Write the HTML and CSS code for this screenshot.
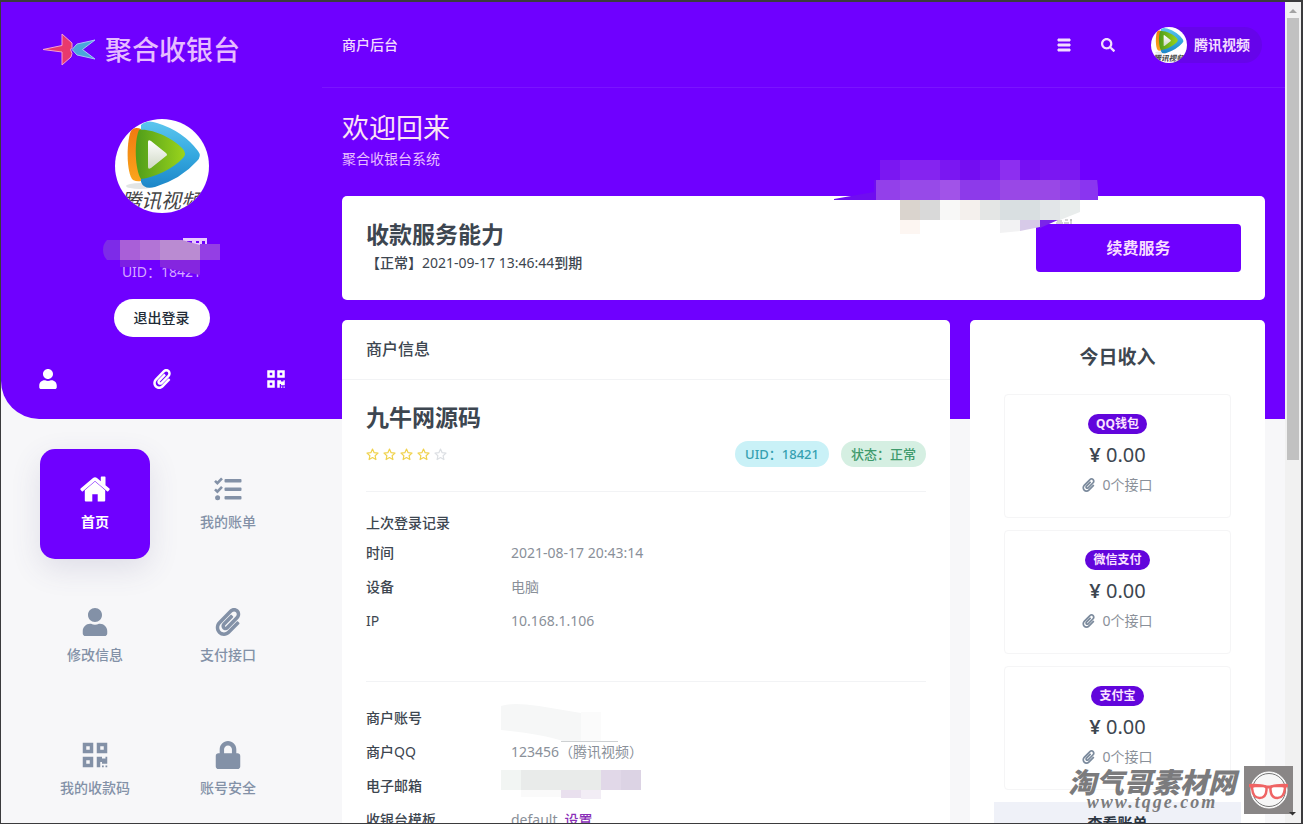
FILE: index.html
```html
<!DOCTYPE html>
<html lang="zh-CN">
<head>
<meta charset="utf-8">
<title>商户后台</title>
<link rel="stylesheet" href="styles.css">
</head>
<body>
<svg class="defs" width="0" height="0" aria-hidden="true">
  <defs>
    <linearGradient id="gBlue" x1="0" y1="0" x2="0" y2="1"><stop offset="0" stop-color="#5cc6ee"/><stop offset="0.5" stop-color="#35a9e0"/><stop offset="1" stop-color="#1c86c8"/></linearGradient>
    <linearGradient id="gGreen" x1="0" y1="0" x2="1" y2="0"><stop offset="0" stop-color="#4f9d1a"/><stop offset="1" stop-color="#9bd41c"/></linearGradient>
    <linearGradient id="gOrange" x1="0" y1="0" x2="0" y2="1"><stop offset="0" stop-color="#f07a10"/><stop offset="1" stop-color="#fba51c"/></linearGradient>
    <linearGradient id="gPlay" x1="0" y1="0" x2="0" y2="1"><stop offset="0" stop-color="#ffffff"/><stop offset="1" stop-color="#cfd8c4"/></linearGradient>
    <clipPath id="round"><circle cx="47" cy="47" r="47"/></clipPath>
  </defs>
  <symbol id="i-user" viewBox="0 0 448 512"><path d="M224 256c70.7 0 128-57.3 128-128S294.700 0 224 0 96 57.300 96 128s57.300 128 128 128zm89.600 32h-16.700c-22.200 10.200-46.900 16-72.900 16s-50.600-5.800-72.900-16h-16.700C60.200 288 0 348.200 0 422.400V464c0 26.500 21.500 48 48 48h352c26.500 0 48-21.500 48-48v-41.600c0-74.200-60.200-134.400-134.400-134.400z"/></symbol>
  <symbol id="i-lock" viewBox="0 0 448 512"><path d="M400 224h-24v-72C376 68.200 307.800 0 224 0S72 68.200 72 152v72H48c-26.500 0-48 21.500-48 48v192c0 26.500 21.500 48 48 48h352c26.500 0 48-21.500 48-48V272c0-26.500-21.500-48-48-48zm-104 0H152v-72c0-39.700 32.300-72 72-72s72 32.300 72 72v72z"/></symbol>
  <symbol id="i-search" viewBox="0 0 512 512"><path d="M505 442.700L405.300 343c-4.500-4.500-10.600-7-17-7H372c27.600-35.300 44-79.700 44-128C416 93.100 322.900 0 208 0S0 93.100 0 208s93.100 208 208 208c48.300 0 92.700-16.400 128-44v16.300c0 6.400 2.500 12.500 7 17l99.700 99.700c9.400 9.400 24.600 9.400 33.900 0l28.300-28.300c9.400-9.400 9.400-24.600.1-34zM208 336c-70.700 0-128-57.200-128-128 0-70.700 57.200-128 128-128 70.700 0 128 57.200 128 128 0 70.700-57.200 128-128 128z"/></symbol>
  <symbol id="i-clip" viewBox="0 0 448 512"><path d="M43.246 466.142c-58.430-60.289-57.341-157.511 1.386-217.581L254.392 34c44.316-45.332 116.351-45.336 160.671 0 43.890 44.894 43.943 117.329 0 162.276L232.214 383.128c-29.855 30.537-78.633 30.111-107.982-.998-28.275-29.970-27.368-77.473 1.452-106.953l143.743-146.835c6.182-6.314 16.312-6.422 22.626-.241l22.861 22.379c6.315 6.182 6.422 16.312.241 22.626L171.427 319.927c-4.932 5.045-5.236 13.428-.648 18.292 4.372 4.634 11.245 4.711 15.688.165l182.849-186.851c19.613-20.062 19.613-52.725-.011-72.798-19.189-19.627-49.957-19.637-69.154 0L90.390 293.295c-34.763 35.560-35.299 93.120-1.191 128.313 34.010 35.093 88.985 35.137 123.058.286l172.060-175.999c6.177-6.319 16.307-6.433 22.626-.256l22.877 22.364c6.319 6.177 6.434 16.307.256 22.626l-172.060 175.998c-59.576 60.938-155.943 60.216-214.770-.485z"/></symbol>
  <symbol id="i-qr" viewBox="0 0 448 512"><path d="M0 224h192V32H0v192zM64 96h64v64H64V96zm192-64v192h192V32H256zm128 128h-64V96h64v64zM0 480h192V288H0v192zm64-128h64v64H64v-64zm352-64h32v128h-96v-32h-32v96h-64V288h96v32h64v-32zm0 160h32v32h-32v-32zm-64 0h32v32h-32v-32z"/></symbol>
  <symbol id="i-home" viewBox="0 0 30 26"><path d="M15 5.500 4.800 14.200V24.500a1 1 0 0 0 1 1H12.300V18.300h5.400V25.500h6.500a1 1 0 0 0 1-1V14.200z"/><path d="M29.400 12.600 25.500 9.300V1.200a.7.700 0 0 0-.7-.7H21.500a.7.700 0 0 0-.7.700V5.300L17 2.100a3 3 0 0 0-4 0L.6 12.600a.8.800 0 0 0-.1 1.100l1.300 1.500a.8.800 0 0 0 1.100.1L15 5l12.100 10.300a.8.800 0 0 0 1.100-.1l1.300-1.500a.8.800 0 0 0-.1-1.100z"/></symbol>
  <symbol id="i-tasks" viewBox="0 0 28 24"><g fill="none" stroke="currentColor" stroke-width="2.600"><path d="M1 3.800 3.400 6.200 8 1.300M1 12.300l2.400 2.400L8 9.800"/></g><circle cx="3.600" cy="20.800" r="2.500"/><rect x="10.500" y="2" width="17" height="3.600" rx="1"/><rect x="10.500" y="10.500" width="17" height="3.600" rx="1"/><rect x="10.500" y="19" width="17" height="3.600" rx="1"/></symbol>
  <symbol id="i-star" viewBox="0 0 24 24"><path fill="none" stroke="currentColor" stroke-width="2.200" stroke-linejoin="round" d="m12 2 3 6.600 7.200.8-5.400 4.800 1.500 7.100L12 17.700l-6.300 3.600 1.500-7.100-5.400-4.800L9 8.600z"/></symbol>
  <symbol id="i-avatar" viewBox="0 0 94 94">
    <g clip-path="url(#round)">
      <rect width="94" height="94" fill="#fff"/>
      <ellipse cx="25" cy="67" rx="14" ry="3" fill="#e2e5e5"/>
      <path fill="url(#gOrange)" d="M17 10q5-2 9 0V62q-4 1-8-1c-7-6-7-42-1-51z"/>
      <path fill="url(#gBlue)" d="M26 6Q32 0 42 4 68 12 83 32q4 5-1 10Q66 60 40 68q-11 3-14-5z"/>
      <path fill="url(#gGreen)" d="M24 11c12-2 34 8 44 19q4 5 0 9C58 50 38 59 26 60c-6-9-7-38-2-49z"/>
      <path fill="url(#gPlay)" d="M33 23q0-3 3-1l15 12q2 2 0 3L36 49q-3 2-3-1z"/>
      <text class="avatar-text" x="6" y="89">腾讯视频</text>
    </g>
  </symbol>
</svg>

<div class="window">
  <div class="page">
    <div class="hero-bg"></div>

    <aside class="sidebar">
      <a class="brand" href="#">
        <svg width="55" height="34" viewBox="0 0 55 34" aria-hidden="true">
          <path d="M1 16.500 20 12.500V1l10 9v4.500l-1.500 2 1.500 4-1 3.500L20 32V19z" fill="#e8396d" stroke="#f7a0cf"/>
          <path d="M30 16.500 35 11l18-4-12.500 9.500L53 26l-18-4z" fill="#4aa8da" stroke="#a8c4f7"/>
        </svg>
        <span>聚合收银台</span>
      </a>
      <div class="profile">
        <svg class="avatar-lg" role="img" aria-label="头像"><use href="#i-avatar"/></svg>
        <p class="uid">UID：18421</p>
        <svg class="name-mask" width="118" height="44" viewBox="0 0 118 44" aria-hidden="true">
          <path d="M80 0h24v8H80z" fill="#e9c8ff"/>
          <path d="M84 3h5v2h-5zM93 3h3v2h-3zM99 3h3v3h-3z" fill="#6f00ff"/>
          <path d="M4 2h13v20H4q-4-4-4-10T4 2z" fill="#7d2be8"/>
          <path d="M17 2h20v20H17z" fill="#a95fd8"/><path d="M37 2h20v20H37z" fill="#b274d6"/>
          <path d="M57 2h22l18 5v15H57z" fill="#ba8bd2"/><path d="M97 6h20v16H97z" fill="#943fe4"/>
          <path d="M17 22h20v7H17z" fill="#7c1fe4"/><path d="M37 22h20v7H37z" fill="#6f00ff"/>
          <path d="M57 22h40v15L57 29z" fill="#8526df"/>
        </svg>
        <button class="logout" type="button">退出登录</button>
      </div>
      <nav class="quick" aria-label="快捷入口">
        <a href="#" aria-label="修改信息"><svg class="ico-20"><use href="#i-user"/></svg></a>
        <a href="#" aria-label="支付接口"><svg class="ico-20"><use href="#i-clip"/></svg></a>
        <a href="#" aria-label="我的收款码"><svg class="ico-20"><use href="#i-qr"/></svg></a>
      </nav>
      <nav class="tiles" aria-label="主菜单">
        <a class="tile active" href="#"><svg class="ico-30"><use href="#i-home"/></svg><span>首页</span></a>
        <a class="tile" href="#"><svg class="ico-28"><use href="#i-tasks"/></svg><span>我的账单</span></a>
        <a class="tile" href="#"><svg class="ico-28"><use href="#i-user"/></svg><span>修改信息</span></a>
        <a class="tile" href="#"><svg class="ico-28"><use href="#i-clip"/></svg><span>支付接口</span></a>
        <a class="tile" href="#"><svg class="ico-28"><use href="#i-qr"/></svg><span>我的收款码</span></a>
        <a class="tile" href="#"><svg class="ico-28"><use href="#i-lock"/></svg><span>账号安全</span></a>
      </nav>
    </aside>

    <div class="main">
      <header class="topbar">
        <a class="crumb" href="#">商户后台</a>
        <div class="actions">
          <button class="icon-btn" type="button" aria-label="菜单"><svg width="14" height="14" viewBox="0 0 14 14"><path d="M1 1h12v2H1zM1 6h12v2H1zM1 11h12v2H1z" stroke="currentColor" stroke-width="1" stroke-linejoin="round"/></svg></button>
          <button class="icon-btn" type="button" aria-label="搜索"><svg width="14" height="14"><use href="#i-search"/></svg></button>
          <a class="account" href="#"><svg class="avatar-sm" aria-hidden="true"><use href="#i-avatar"/></svg><span>腾讯视频</span></a>
        </div>
      </header>

      <main class="content">
        <h1>欢迎回来</h1>
        <p class="sub">聚合收银台系统</p>

        <section class="card service">
          <div>
            <h2>收款服务能力</h2>
            <p><b>【正常】</b>2021-09-17 13:46:44<b>到期</b></p>
          </div>
          <button class="renew" type="button">续费服务</button>
          <svg class="wave-mask" width="284" height="78" viewBox="0 0 284 78" aria-hidden="true">
            <path d="M64 2h200v20H64z" fill="#7b17f2"/><path d="M84 2h40v20H84z" fill="#8524f0"/><path d="M144 2h20v20h-20z" fill="#740df2"/><path d="M184 2h20v20h-20z" fill="#8d2ff0"/><path d="M204 2h20v20h-20z" fill="#760ff4"/>
            <path d="M18 42v-1l40-7V22h224v20z" fill="#6f0df0"/>
            <path d="M60 22h24v20H60z" fill="#9340ea"/><path d="M84 22h40v20H84z" fill="#974ae8"/><path d="M124 22h20v20h-20z" fill="#a153e8"/><path d="M144 22h40v20h-40z" fill="#8d3aea"/><path d="M184 22h60v20h-60z" fill="#9948e6"/><path d="M244 22h20v20h-20z" fill="#9040ea"/><path d="M264 22h17l1 8v12h-18z" fill="#8a35f0"/>
            <path d="M84 42h20v20H84z" fill="#dad4ce"/><path d="M104 42h20v20h-20z" fill="#d9d9d9"/><path d="M124 42h20v20h-20z" fill="#f8f8f7"/><path d="M144 42h20v20h-20z" fill="#f4f0ed"/><path d="M164 42h20v20h-20z" fill="#e4e6e5"/><path d="M184 42h40v20h-40z" fill="#d9dfe1"/><path d="M224 42h20v20h-20z" fill="#e2e5e8"/><path d="M244 42h20v12l-20 8z" fill="#e9edec"/>
            <path d="M84 62h20v14H84z" fill="#fdf6f2"/><path d="M184 62h20v11l-20 2z" fill="#f2f2f3"/><path d="M204 62h20v7l-20 4z" fill="#d7cae8"/><path d="M224 62h18l-18 8z" fill="#7a25e8"/>
            <path d="M241 63h5M240 65h7M249 62h3M248 65h5M254 62h2M255 61v5" stroke="#aaa" stroke-width="1" fill="none"/>
          </svg>
        </section>

        <div class="columns">
          <section class="card merchant">
            <h3 class="card-head">商户信息</h3>
            <div class="card-body">
              <h2>九牛网源码</h2>
              <div class="rating">
                <div class="stars" role="img" aria-label="4 / 5">
                  <svg><use href="#i-star"/></svg><svg><use href="#i-star"/></svg><svg><use href="#i-star"/></svg><svg><use href="#i-star"/></svg><svg class="off"><use href="#i-star"/></svg>
                </div>
                <div class="pills"><span class="pill info">UID：18421</span><span class="pill ok">状态：正常</span></div>
              </div>
              <div class="block login">
                <h4>上次登录记录</h4>
                <dl>
                  <dt>时间</dt><dd>2021-08-17 20:43:14</dd>
                  <dt>设备</dt><dd>电脑</dd>
                  <dt class="latin">IP</dt><dd>10.168.1.106</dd>
                </dl>
              </div>
              <div class="block details">
                <dl>
                  <dt>商户账号</dt>
                  <dd class="masked"><svg class="mask" width="130" height="42" viewBox="0 0 130 42" aria-hidden="true"><path d="M0 4q10-4 38 0l42 7v28H62Q40 32 0 28z" fill="#f6f7f7"/><path d="M80 10h20v30H80z" fill="#fbfbfb"/><path d="M60 39h57v1H60z" fill="#cdd0d2"/></svg></dd>
                  <dt>商户<span class="latin">QQ</span></dt><dd>123456（腾讯视频）</dd>
                  <dt>电子邮箱</dt>
                  <dd class="masked"><svg class="mask" width="140" height="30" viewBox="0 0 140 30" aria-hidden="true"><path d="M0 0h20v20H0z" fill="#f2f5f3"/><path d="M20 0h80v20H20z" fill="#e9ebea"/><path d="M100 0h20v20h-20z" fill="#e1d8e8"/><path d="M120 0h20v20h-20z" fill="#dcd3e4"/><path d="M20 20h40v7H20z" fill="#fafafa"/><path d="M60 20h20v8H60z" fill="#e9e0ee"/><path d="M80 20h20v9H80z" fill="#f2edf5"/></svg></dd>
                  <dt>收银台模板</dt><dd>default&ensp;<a class="set" href="#">设置</a></dd>
                </dl>
              </div>
            </div>
          </section>

          <section class="card income">
            <h3>今日收入</h3>
            <div class="channel"><span class="tag">QQ钱包</span><p class="amount"><b>¥</b> 0.00</p><p class="ports"><svg><use href="#i-clip"/></svg>0个接口</p></div>
            <div class="channel"><span class="tag">微信支付</span><p class="amount"><b>¥</b> 0.00</p><p class="ports"><svg><use href="#i-clip"/></svg>0个接口</p></div>
            <div class="channel"><span class="tag">支付宝</span><p class="amount"><b>¥</b> 0.00</p><p class="ports"><svg><use href="#i-clip"/></svg>0个接口</p></div>
            <a class="bills" href="#">查看账单</a>
          </section>
        </div>
      </main>
    </div>
  </div>

  <div class="scrollbar" aria-hidden="true">
    <svg width="16" height="16" viewBox="0 0 16 16"><path d="M4 11 8 7l4 4z" fill="#a3a3a3"/></svg>
    <div class="track"><div class="thumb"></div></div>
    <svg width="16" height="16" viewBox="0 0 16 16"></svg>
  </div>

  <div class="watermark">
    <div class="wm-text"><span class="wm-name">淘气哥素材网</span><span class="wm-url">www.tqge.com</span></div>
    <svg width="49" height="48" viewBox="0 0 49 48" aria-hidden="true">
      <rect width="49" height="48" fill="#898686"/>
      <circle cx="25" cy="24" r="18" fill="#f7f7f7" stroke="#fff"/><circle cx="25" cy="24" r="16.500" fill="none" stroke="#777"/>
      <g stroke="#ef6464" stroke-width="2.500" fill="#fff"><path d="M8 22q0-2 3-2h8q4 0 3.500 4-.5 8-7 8-6.500 0-7.500-10z"/><path d="M41 22q0-2-3-2h-8q-4 0-3.500 4 .5 8 7 8 6.500 0 7.500-10z"/></g>
      <path d="M5 18q9-1 18 1.500h3Q35 17 44 18v3l-3 1-2-2h-8l-5 2.500h-3L18 20h-8l-2 2-3-1z" fill="#ef6464"/>
      <path d="M45 46h7l-3.500 3.500z" fill="#333"/>
    </svg>
  </div>
</div>
</body>
</html>
```
FILE: styles.css
```css
:root {
  --purple: #6f00ff;
  --ink: #3d4650;
  --muted: #8a9099;
  --slate: #8391a7;
}

* { box-sizing: border-box; }

body {
  margin: 0;
  font-family: "Noto Sans", "Noto Sans CJK SC", sans-serif;
  font-size: 14px;
  line-height: 20px;
  color: var(--ink);
}

h1, h2, h3, h4, p, dl, dd { margin: 0; }
a { color: inherit; text-decoration: none; }
button { font: inherit; border: 0; cursor: pointer; }
svg { display: block; fill: currentColor; }
.defs { position: absolute; }

.window {
  position: relative;
  display: flex;
  height: 100vh;
  overflow: hidden;
  border: solid #3b3b3d;
  border-width: 2px 2px 1px 1px;
}

.page {
  position: relative;
  flex: 1;
  min-width: 0;
  display: flex;
  overflow: hidden;
  background: #f7f7f9;
}

.hero-bg {
  position: absolute;
  inset: 0 0 auto 0;
  height: 417px;
  background: var(--purple);
  border-bottom-left-radius: 38px;
}

/* Sidebar */
.sidebar {
  position: relative;
  flex: 0 0 319px;
  color: #fff;
}
.brand {
  display: flex;
  align-items: center;
  gap: 8px;
  height: 95px;
  padding-left: 41px;
  font-size: 27px;
  font-weight: 500;
  color: #e6bcff;
}
.avatar-text {
  font-family: "Noto Sans CJK SC", sans-serif;
  font-size: 20px;
  font-style: italic;
  fill: #444;
}
.profile {
  position: relative;
  display: flex;
  flex-direction: column;
  align-items: center;
  padding-top: 22px;
}
.avatar-lg { width: 94px; height: 94px; }
.uid {
  margin-top: 49px;
  font-size: 14px;
  color: #d6a8ff;
}
.name-mask { position: absolute; top: 141px; left: 102px; }
.logout {
  margin-top: 17px;
  padding: 9px 20px;
  border-radius: 20px;
  background: #fff;
  color: #212b36;
  font-weight: 500;
}
.quick {
  display: flex;
  justify-content: space-between;
  padding: 32px 36px 0 37px;
}
.ico-20 { width: 20px; height: 20px; }
.ico-28 { width: 28px; height: 28px; }
.ico-30 { width: 30px; height: 28px; }
.tiles {
  display: grid;
  grid-template-columns: 110px 110px;
  gap: 23px;
  padding: 60px 39px 0;
}
.tile {
  display: flex;
  flex-direction: column;
  align-items: center;
  justify-content: center;
  gap: 9px;
  height: 110px;
  padding-bottom: 2px;
  border-radius: 15px;
  color: var(--slate);
  font-weight: 500;
}
.tile.active {
  background: var(--purple);
  color: #fff;
  font-weight: 700;
  box-shadow: 0 10px 30px rgba(80, 70, 130, 0.14);
}

/* Main column */
.main { position: relative; flex: 1; min-width: 0; }
.topbar {
  display: flex;
  align-items: center;
  justify-content: space-between;
  height: 86px;
  padding: 0 23px 0 20px;
  border-bottom: 1px solid #7a14ff;
  color: #f3dcff;
}
.crumb { font-weight: 500; }
.actions { display: flex; align-items: center; gap: 30px; }
.icon-btn { padding: 0; background: none; color: inherit; }
.account {
  display: flex;
  align-items: center;
  gap: 7px;
  margin-left: 6px;
  padding-right: 12px;
  border-radius: 20px;
  background: #6604ea;
  font-weight: 700;
}
.icon-btn svg { width: 14px; height: 14px; }
.avatar-sm { width: 36px; height: 36px; }

.content { padding: 20px 20px 0 20px; }
.content h1 {
  font-size: 27px;
  font-weight: 400;
  line-height: 40px;
  color: #fbe4f4;
}
.sub { margin-top: 1px; color: #e9bfff; }

.card {
  background: #fff;
  border-radius: 5px;
}
.card h2 {
  font-size: 23px;
  line-height: 30px;
  font-weight: 700;
}
.service {
  position: relative;
  display: flex;
  justify-content: space-between;
  align-items: flex-start;
  margin-top: 27px;
  padding: 23px 24px;
  min-height: 104px;
}
.service p { margin-top: 4px; }
.service b { font-weight: 500; }
.renew {
  width: 205px;
  padding: 14px;
  margin-top: 5px;
  border-radius: 4px;
  background: var(--purple);
  color: #f8dcff;
  font-size: 16px;
  font-weight: 700;
}
.wave-mask { position: absolute; top: -38px; right: 165px; }

.columns {
  display: grid;
  grid-template-columns: minmax(0, 1fr) 295px;
  align-items: start;
  gap: 20px;
  margin-top: 20px;
}
.card-head {
  padding: 19px 24px 20px;
  border-bottom: 1px solid #f2f3f5;
  font-size: 16px;
  font-weight: 500;
}
.card-body { padding: 22px 24px; }
.rating {
  display: flex;
  align-items: center;
  justify-content: space-between;
  margin-top: 9px;
  padding-bottom: 24px;
}
.stars { display: flex; gap: 4px; color: #f0d24c; }
.stars svg { width: 13px; height: 13px; }
.stars .off { color: #dcdfe3; }
.pills { display: flex; gap: 12px; }
.pill {
  padding: 3px 10px;
  border-radius: 13px;
  font-size: 13px;
  font-weight: 500;
}
.info { background: #c9f1f7; color: #35a0b0; }
.ok { background: #d5efe2; color: #3f9a6c; }

.block { border-top: 1px solid #f2f3f5; }
.login { padding: 21px 0 50px; }
.block h4 { font-size: 14px; font-weight: 500; }
.block dl {
  display: grid;
  grid-template-columns: 145px minmax(0, 1fr);
  row-gap: 14px;
}
.login dl { margin-top: 10px; }
.details { padding-top: 26px; }
.block dt { font-weight: 500; }
.block .latin { font-weight: 400; }
.block dd { color: var(--muted); }
.masked { position: relative; }
.mask { position: absolute; top: -6px; left: -10px; }
.set { color: #8a2fb8; font-weight: 500; }

.income { padding: 24px; text-align: center; }
.income h3 {
  margin-bottom: 24px;
  font-size: 19px;
  line-height: 26px;
}
.channel {
  display: flex;
  flex-direction: column;
  align-items: center;
  margin: 0 10px 12px;
  padding: 19px 10px 22px;
  border: 1px solid #f5f5f6;
  border-radius: 4px;
}
.tag {
  padding: 0 8px;
  border-radius: 10px;
  background: #6205dc;
  color: #fbe2ff;
  font-size: 12px;
  font-weight: 700;
}
.amount { margin-top: 8px; font-size: 20px; line-height: 26px; }
.amount b { font-weight: 600; }
.ports {
  display: flex;
  align-items: center;
  gap: 7px;
  margin-top: 7px;
  color: var(--muted);
}
.ports svg { width: 13px; height: 14px; color: #7c8b9d; }
.bills {
  display: block;
  padding: 11px;
  background: #eff1f8;
  color: #2b3542;
  font-size: 15px;
  font-weight: 700;
}

/* Window scrollbar */
.scrollbar {
  display: flex;
  flex-direction: column;
  flex: 0 0 16px;
  background: #f1f1f1;
}
.track { flex: 1; padding: 0 2px; }
.thumb { height: 56%; background: #c1c1c1; }

.watermark {
  position: absolute;
  right: 8px;
  bottom: 9px;
  display: flex;
  align-items: center;
  gap: 8px;
}
.watermark svg { overflow: visible; }
.wm-text {
  display: flex;
  flex-direction: column;
  align-items: center;
  padding-bottom: 4px;
  color: #7b7b7d;
}
.wm-name {
  font-family: "Noto Sans CJK SC", sans-serif;
  font-size: 28px;
  line-height: 28px;
  font-weight: 900;
  font-style: italic;
}
.wm-url {
  font-family: "Liberation Serif", serif;
  font-size: 18px;
  line-height: 14px;
  font-weight: 700;
  font-style: italic;
  letter-spacing: 2px;
}
```
